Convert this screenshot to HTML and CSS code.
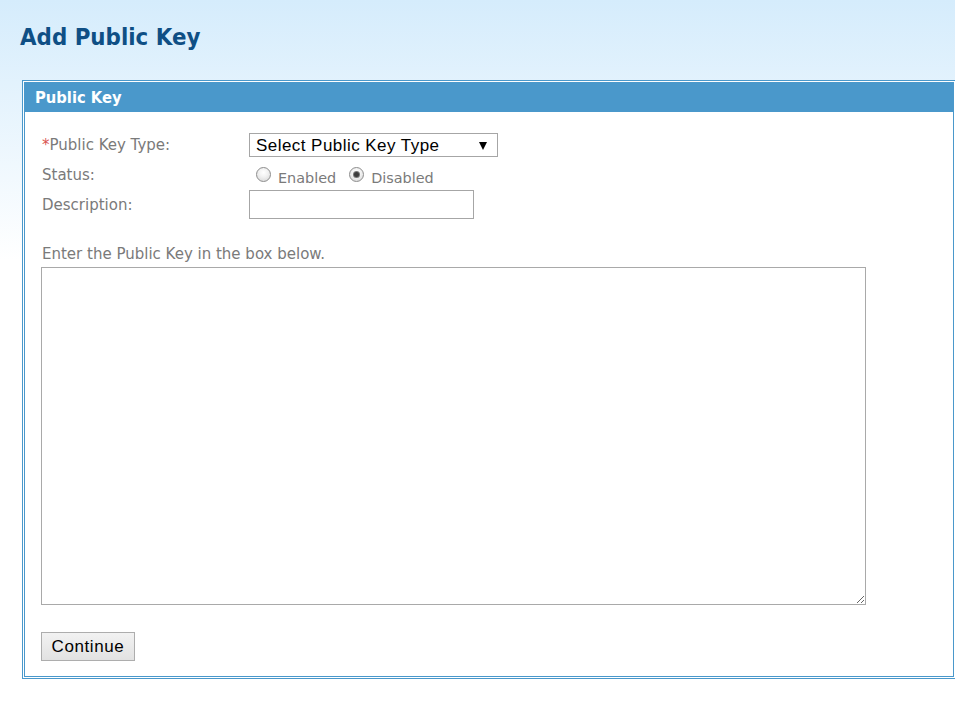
FILE: index.html
```html
<!DOCTYPE html>
<html lang="en">
<head>
<meta charset="utf-8">
<title>Add Public Key</title>
<link rel="stylesheet" href="styles.css">
</head>
<body>
<h1 class="page-title">Add Public Key</h1>
<div class="panel">
  <div class="panel-inner">
    <div class="panel-header">Public Key</div>
    <div class="panel-body">
      <div class="fields">
        <label class="field-label label-type"><span class="req">*</span>Public Key Type:</label>
        <div class="select-wrap">
          <select class="select"><option>Select Public Key Type</option></select>
        </div>
        <label class="field-label label-status">Status:</label>
        <div class="radios">
          <span class="radio"></span><span class="radio-text">Enabled</span>
          <span class="radio checked"></span><span class="radio-text">Disabled</span>
        </div>
        <label class="field-label label-desc">Description:</label>
        <div class="input-cell"><input class="text-input" type="text"></div>
      </div>
      <p class="hint">Enter the Public Key in the box below.</p>
      <textarea class="key-area"></textarea>
      <button class="btn" type="button">Continue</button>
    </div>
  </div>
</div>
</body>
</html>
```

FILE: styles.css
```css
html {
  overflow: hidden;
  min-height: 100%;
  background: linear-gradient(#d5ecfc 0px, #ffffff 260px);
}
body {
  margin: 0;
  font-family: "DejaVu Sans", sans-serif;
  color: #7a7a7a;
}
.page-title {
  margin: 0;
  padding: 25px 0 0 20px;
  height: 80px;
  box-sizing: border-box;
  font-family: "DejaVu Sans Condensed", "DejaVu Sans", sans-serif;
  font-stretch: condensed;
  font-size: 23.8px;
  line-height: 24px;
  font-weight: bold;
  color: #0f4f85;
}
.panel {
  margin-left: 22px;
  width: 934px;
  box-sizing: border-box;
  border: 1px solid #4a98cb;
  padding: 1px;
  background: #fff;
}
.panel-inner {
  border: 1px solid #4a98cb;
}
.panel-header {
  height: 29px;
  background: #4a98cb;
  color: #fff;
  font-family: "DejaVu Sans Condensed", "DejaVu Sans", sans-serif;
  font-stretch: condensed;
  font-weight: bold;
  font-size: 16.4px;
  line-height: 29px;
  padding-left: 10px;
}
.panel-body {
  padding: 0 16px 15px 16px;
}
.fields {
  display: grid;
  grid-template-columns: 208px 1fr;
  grid-template-rows: 24px 33px 29px;
  margin-top: 21px;
  font-size: 15px;
  line-height: 18px;
}
.field-label {
  padding-left: 1px;
}
.label-type { align-self: center; }
.label-status { padding-top: 9px; }
.label-desc { align-self: center; }
.req { color: #d9534f; }
.select-wrap {
  position: relative;
  width: 249px;
  height: 24px;
}
.select {
  appearance: none;
  -webkit-appearance: none;
  display: block;
  width: 249px;
  height: 24px;
  box-sizing: border-box;
  margin: 0;
  border: 1px solid #a6a6a6;
  border-radius: 0;
  background: #fff;
  padding: 0 0 0 6px;
  font-family: "Liberation Sans", Arial, sans-serif;
  font-size: 17px;
  letter-spacing: 0.45px;
  color: #000;
}
.select-wrap::after {
  content: "";
  position: absolute;
  left: 230px;
  top: 9px;
  width: 0;
  height: 0;
  border-left: 4.5px solid transparent;
  border-right: 4.5px solid transparent;
  border-top: 8px solid #000;
  pointer-events: none;
}
.radios {
  display: flex;
  align-items: flex-start;
  padding: 10px 0 0 7px;
}
.radio {
  width: 15px;
  height: 15px;
  box-sizing: border-box;
  border-radius: 50%;
  border: 1px solid #8d8d8d;
  background: radial-gradient(circle at 50% 35%, #ffffff 0, #f2f2f2 40%, #d4d4d4 100%);
  display: flex;
  align-items: center;
  justify-content: center;
}
.radio.checked::after {
  content: "";
  width: 5px;
  height: 5px;
  border-radius: 50%;
  background: #3c3c3c;
  box-shadow: 0 0 0 1px #777;
}
.radio-text {
  margin: 2px 13px 0 7px;
  font-size: 14.4px;
}
.text-input {
  display: block;
  width: 225px;
  height: 29px;
  box-sizing: border-box;
  margin: 0;
  border: 1px solid #a6a6a6;
  padding: 2px 4px;
  background: #fff;
}
.hint {
  margin: 26px 0 4px 1px;
  font-size: 15px;
  line-height: 18px;
}
.key-area {
  display: block;
  width: 825px;
  height: 338px;
  box-sizing: border-box;
  margin: 0;
  border: 1px solid #a9a9a9;
  padding: 2px;
  resize: both;
  background: #fff;
}
.btn {
  display: block;
  margin-top: 27px;
  width: 94px;
  height: 29px;
  box-sizing: border-box;
  padding: 0;
  border: 1px solid #adadad;
  border-radius: 0;
  background: linear-gradient(#f2f2f2, #e2e2e2);
  font-family: "Liberation Sans", Arial, sans-serif;
  font-size: 17px;
  letter-spacing: 0.6px;
  color: #000;
}
```
